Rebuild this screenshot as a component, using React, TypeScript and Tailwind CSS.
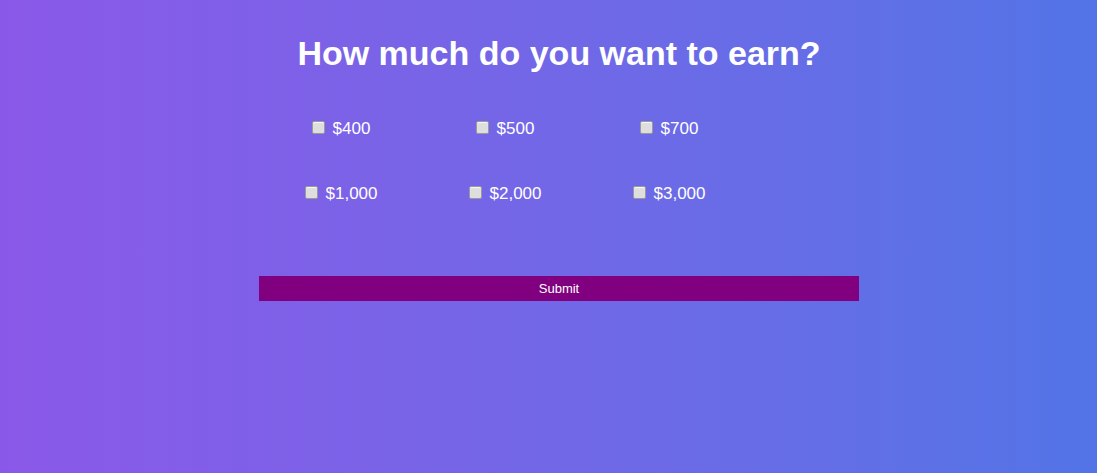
import React from "react";

const amounts = [
  ["$400", "$500", "$700"],
  ["$1,000", "$2,000", "$3,000"],
];

export default function App() {
  return (
    <div
      className="w-full h-[473px] bg-gradient-to-r from-[#8a58e8] to-[#5274e6] text-white flex justify-center pl-[21px]"
      style={{ fontFamily: '"Liberation Sans", Arial, sans-serif' }}
    >
      <div className="w-[600px] flex flex-col">
        <h1 className="mt-[34px] text-[34px] leading-[39px] font-bold text-center">
          How much do you want to earn?
        </h1>
        <div className="mt-[23px] flex flex-col">
          {amounts.map((row, i) => (
            <div key={i} className="grid grid-cols-[164px_164px_164px] h-[65px]">
              {row.map((a) => (
                <label key={a} className="flex items-center justify-center gap-[8px] text-[17px] leading-[20px]">
                  <input
                    type="checkbox"
                    className="appearance-none w-[13px] h-[13px] bg-[#dedede] border border-[#9a9a9a] rounded-[2px] shadow-[inset_0_1px_1px_rgba(255,255,255,0.8)] -translate-y-[1px]"
                  />
                  <span>{a}</span>
                </label>
              ))}
            </div>
          ))}
        </div>
        <button className="mt-[50px] h-[25px] w-[600px] bg-[#800080] text-white text-[13px] leading-[25px] text-center">
          Submit
        </button>
      </div>
    </div>
  );
}
